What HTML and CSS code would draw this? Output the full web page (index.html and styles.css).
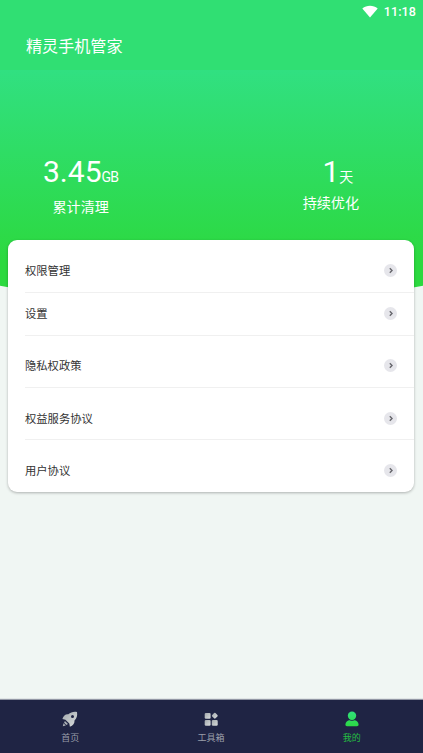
FILE: index.html
```html
<!DOCTYPE html>
<html lang="zh-CN">
<head>
<meta charset="utf-8">
<title>精灵手机管家</title>
<link rel="stylesheet" href="styles.css">
</head>
<body>
<div class="app">
  <header class="header">
    <div class="status">
      <svg class="wifi" viewBox="0 0 16 13"><path d="M.3 3.4C4.6-.3 11.4-.3 15.7 3.4L8 12.6z"/></svg>
      <span>11:18</span>
    </div>
    <h1 class="title">精灵手机管家</h1>
  </header>
  <section class="hero">
    <div class="stat stat-clean">
      <div class="value">3.45<small>GB</small></div>
      <div class="label">累计清理</div>
    </div>
    <div class="stat stat-days">
      <div class="value">1<small>天</small></div>
      <div class="label">持续优化</div>
    </div>
  </section>
  <main class="card">
    <div class="row row-first"><span>权限管理</span><svg class="arrow" viewBox="0 0 13 13"><circle cx="6.5" cy="6.5" r="6.5"/><path d="M5.8 4.3 8 6.5 5.8 8.7"/></svg></div>
    <div class="row row-short"><span>设置</span><svg class="arrow" viewBox="0 0 13 13"><circle cx="6.5" cy="6.5" r="6.5"/><path d="M5.8 4.3 8 6.5 5.8 8.7"/></svg></div>
    <div class="row"><span>隐私权政策</span><svg class="arrow" viewBox="0 0 13 13"><circle cx="6.5" cy="6.5" r="6.5"/><path d="M5.8 4.3 8 6.5 5.8 8.7"/></svg></div>
    <div class="row"><span>权益服务协议</span><svg class="arrow" viewBox="0 0 13 13"><circle cx="6.5" cy="6.5" r="6.5"/><path d="M5.8 4.3 8 6.5 5.8 8.7"/></svg></div>
    <div class="row"><span>用户协议</span><svg class="arrow" viewBox="0 0 13 13"><circle cx="6.5" cy="6.5" r="6.5"/><path d="M5.8 4.3 8 6.5 5.8 8.7"/></svg></div>
  </main>
  <nav class="nav">
    <div class="tab">
      <svg viewBox="0 0 16 16"><defs><linearGradient id="silver" x1="0" y1="0" x2="1" y2="1"><stop offset="0" stop-color="#a2a8ac"/><stop offset="1" stop-color="#d9dddd"/></linearGradient></defs><path fill="url(#silver)" fill-rule="evenodd" d="M15 1C11.600.4 8.600 1.300 6.300 3.300 3.500 2.900 1.400 4.900.4 7.900l3 .8 3.900 3.900.6 3.100c3.100-1.300 4.900-3.400 4.600-6.300C14.800 7.400 15.600 4.600 15 1zM10.500 4a1.500 1.500 0 1 1 0 3 1.500 1.500 0 0 1 0-3z"/><path fill="#a9aeb4" d="M2.900 10 6 13.100 4.300 13.900 2.100 11.700zM1.500 12.200 3.800 14.500.8 15.200z"/></svg>
      <span>首页</span>
    </div>
    <div class="tab">
      <svg viewBox="0 0 16 16" fill="url(#silver)"><rect x="1.700" y="1.900" width="5.900" height="5.900" rx="1.200"/><rect x="1.700" y="8.900" width="5.900" height="5.900" rx="1.200"/><rect x="8.800" y="8.900" width="5.900" height="5.900" rx="1.200"/><path d="M11.100 2.100q.7-.7 1.400 0l1.900 1.900q.7.7 0 1.400l-1.900 1.900q-.7.7-1.400 0L9.200 5.400q-.7-.7 0-1.400z"/></svg>
      <span>工具箱</span>
    </div>
    <div class="tab active">
      <svg viewBox="0 0 16 16"><defs><linearGradient id="green" x1="0" y1="0" x2="0" y2="16" gradientUnits="userSpaceOnUse"><stop stop-color="#31e07c"/><stop offset="1" stop-color="#2cd942"/></linearGradient></defs><g fill="url(#green)"><circle cx="8" cy="4.700" r="4.200"/><path d="M1.400 13.500C1.600 11 3.500 9.200 5.800 9.200q2.200 1 4.400 0c2.300 0 4.200 1.800 4.400 4.300q.1 1.700-1.600 1.700H3q-1.700 0-1.600-1.700z"/></g></svg>
      <span>我的</span>
    </div>
  </nav>
</div>
</body>
</html>
```

FILE: styles.css
```css
* { box-sizing: border-box; }
body {
  margin: 0;
  font-family: Roboto, "Noto Sans CJK SC", sans-serif;
}
.app {
  display: flex;
  flex-direction: column;
  height: 753px;
  background: #f0f6f3;
  overflow: hidden;
}
.header {
  height: 70px;
  flex: none;
  background: #30df73;
  color: #fff;
}
.status {
  display: flex;
  justify-content: flex-end;
  align-items: center;
  gap: 6px;
  height: 22px;
  padding-right: 7px;
  font-size: 12.5px;
  font-weight: 500;
  letter-spacing: .1px;
}
.wifi { width: 16px; height: 13px; fill: #fff; }
.title {
  margin: 13px 0 0 26px;
  font-size: 16.100px;
  font-weight: 400;
  line-height: 24px;
}
.hero {
  display: flex;
  justify-content: space-between;
  flex: none;
  height: 226px;
  padding: 84px 64px 0 43px;
  background: linear-gradient(#31e081, #2cd93f 85%);
  clip-path: ellipse(600px 300px at 50% -65px);
  color: #fff;
}
.stat { display: flex; flex-direction: column; align-items: center; }
.value { font-size: 30px; line-height: 36px; white-space: nowrap; height: 36px; }
.value small { font-size: 14px; }
.stat-clean small { letter-spacing: -.7px; }
.label { font-size: 14.100px; line-height: 20px; }
.stat-clean .label { margin: 7px 0 0; }
.stat-days .label { margin-top: 3px; }
.stat-days .value { padding-left: 14px; }
.card {
  flex: none;
  height: 251.500px;
  margin: -56px 9px 0 8px;
  border-radius: 9px;
  background: #fff;
  box-shadow: 0 1px 3px rgba(0, 0, 0, .28);
  position: relative;
}
.row {
  display: flex;
  justify-content: space-between;
  align-items: flex-end;
  height: 52.200px;
  margin-left: 17px;
  padding: 0 17px 11px 0;
  border-bottom: 1px solid #f0f0f0;
  font-size: 11.300px;
  line-height: 18px;
  color: #333;
}
.row-first { height: 53px; }
.row-short { height: 43px; }
.row:nth-child(4) { padding-bottom: 10.500px; }
.row:last-child { border: 0; padding-bottom: 11.500px; }
.arrow { width: 13px; height: 13px; margin-bottom: 4.300px; }
.arrow circle { fill: #e6e6eb; }
.arrow path { fill: none; stroke: #66666c; stroke-width: 1.400; }
.nav {
  display: flex;
  flex: none;
  height: 53px;
  margin-top: auto;
  padding-right: 1px;
  background: #1f2444;
  box-shadow: 0 -1px 1px rgba(31, 36, 68, .45);
}
.tab {
  display: flex;
  flex: 1;
  flex-direction: column;
  align-items: center;
  padding-top: 11px;
  color: #999da9;
  font-size: 9px;
  line-height: 14px;
}
.tab svg { width: 16px; height: 16px; margin-bottom: 4px; }
.active { color: #25bd43; }
```
